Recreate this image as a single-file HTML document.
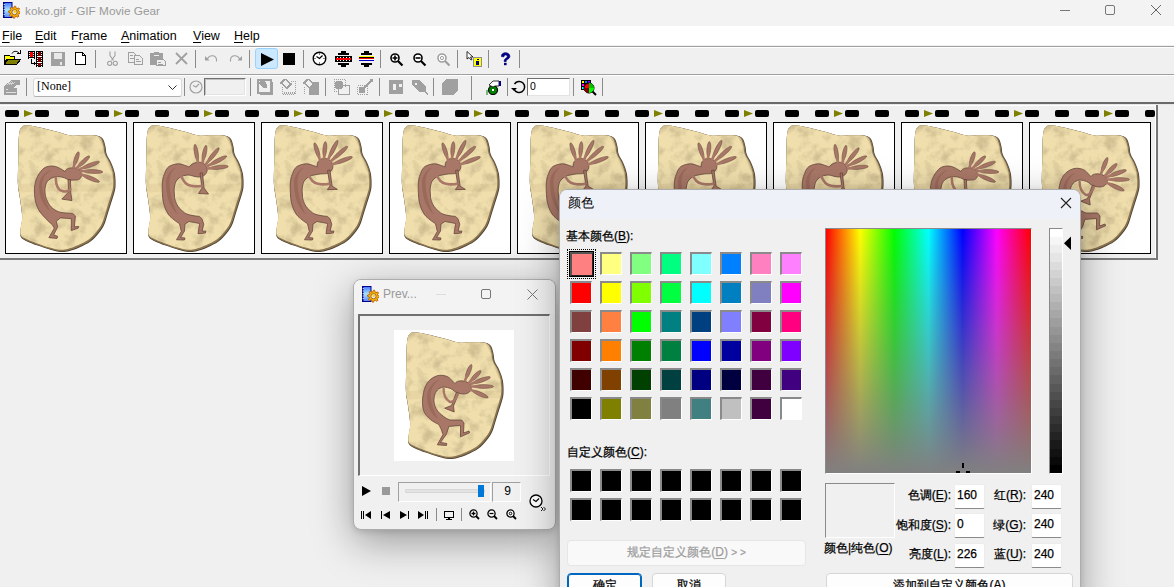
<!DOCTYPE html><html><head><meta charset="utf-8"><style>
*{box-sizing:border-box}
html,body{margin:0;padding:0;width:1174px;height:587px;overflow:hidden;background:#f0f0f0;font-family:"Liberation Sans",sans-serif;font-size:12px;color:#000}
.abs{position:absolute}
.cj{-webkit-text-stroke:0.25px currentColor}
.u{text-decoration:underline;text-underline-offset:2px;text-decoration-thickness:1px}
</style></head><body>

<div class="abs" style="left:0;top:0;width:1174px;height:26px;background:#f3f3f3"></div>
<svg class="abs" style="left:3px;top:2px" width="17" height="17"><defs><linearGradient id="ig" x1="0" y1="0" x2="0" y2="1"><stop offset="0" stop-color="#4a7cff"/><stop offset=".5" stop-color="#a8e4ff"/><stop offset="1" stop-color="#5a8cff"/></linearGradient></defs><rect x="0" y="0" width="9.5" height="16" fill="#00008a"/><rect x="1.5" y="1" width="7" height="14" fill="url(#ig)"/><g fill="#fff"><rect x="0.7" y="2" width="1" height="1"/><rect x="0.7" y="4.5" width="1" height="1"/><rect x="0.7" y="7" width="1" height="1"/><rect x="0.7" y="9.5" width="1" height="1"/><rect x="0.7" y="12" width="1" height="1"/></g><path d="M11.50 4.20 L12.67 4.32 L13.15 6.23 L13.89 6.62 L15.74 5.96 L16.49 6.87 L15.47 8.55 L15.72 9.36 L17.50 10.20 L17.38 11.37 L15.47 11.85 L15.08 12.59 L15.74 14.44 L14.83 15.19 L13.15 14.17 L12.34 14.42 L11.50 16.20 L10.33 16.08 L9.85 14.17 L9.11 13.78 L7.26 14.44 L6.51 13.53 L7.53 11.85 L7.28 11.04 L5.50 10.20 L5.62 9.03 L7.53 8.55 L7.92 7.81 L7.26 5.96 L8.17 5.21 L9.85 6.23 L10.66 5.98Z" fill="#ffb400" stroke="#b85a00" stroke-width="0.9"/><circle cx="11.5" cy="10.2" r="2.6" fill="#e8e8f0" stroke="#8a5000" stroke-width="0.8"/><circle cx="11.8" cy="9.8" r="1.2" fill="#ffd000"/></svg>
<div class="abs" style="left:25px;top:4px;font-size:11.8px;color:#9a9a9a;white-space:nowrap">koko.gif - GIF Movie Gear</div>
<div class="abs" style="left:1060px;top:10px;width:10px;height:1px;background:#777"></div>
<div class="abs" style="left:1105px;top:5px;width:10px;height:10px;border:1px solid #777;border-radius:2px"></div>
<svg class="abs" style="left:1151px;top:5px" width="10" height="10"><path d="M0 0L10 10M10 0L0 10" stroke="#666" stroke-width="1"/></svg>
<div class="abs" style="left:0;top:26px;width:1174px;height:19px;background:#fff"></div>
<div class="abs" style="left:2px;top:29px;font-size:12.5px;white-space:nowrap"><span class="u">F</span>ile</div>
<div class="abs" style="left:35px;top:29px;font-size:12.5px;white-space:nowrap"><span class="u">E</span>dit</div>
<div class="abs" style="left:71px;top:29px;font-size:12.5px;white-space:nowrap">F<span class="u">r</span>ame</div>
<div class="abs" style="left:121px;top:29px;font-size:12.5px;white-space:nowrap"><span class="u">A</span>nimation</div>
<div class="abs" style="left:193px;top:29px;font-size:12.5px;white-space:nowrap"><span class="u">V</span>iew</div>
<div class="abs" style="left:234px;top:29px;font-size:12.5px;white-space:nowrap"><span class="u">H</span>elp</div>
<div class="abs" style="left:0;top:46px;width:1174px;height:1px;background:#a0a0a0"></div>
<div class="abs" style="left:0;top:47px;width:1174px;height:1px;background:#fff"></div>
<div class="abs" style="left:0;top:74px;width:1174px;height:1px;background:#a0a0a0"></div>
<div class="abs" style="left:0;top:75px;width:1174px;height:1px;background:#fff"></div>
<div class="abs" style="left:0;top:102px;width:1174px;height:2px;background:#6a6a6a"></div>
<div class="abs" style="left:0;top:104px;width:1174px;height:1px;background:#e8e8e8"></div>
<div class="abs" style="left:0;top:105px;width:1156px;height:1px;background:#fff"></div>
<div class="abs" style="left:95px;top:50px;width:1px;height:18px;background:#8a8a8a"></div>
<div class="abs" style="left:195px;top:50px;width:1px;height:18px;background:#8a8a8a"></div>
<div class="abs" style="left:249px;top:50px;width:1px;height:18px;background:#8a8a8a"></div>
<div class="abs" style="left:303px;top:50px;width:1px;height:18px;background:#8a8a8a"></div>
<div class="abs" style="left:380px;top:50px;width:1px;height:18px;background:#8a8a8a"></div>
<div class="abs" style="left:457px;top:50px;width:1px;height:18px;background:#8a8a8a"></div>
<div class="abs" style="left:488px;top:50px;width:1px;height:18px;background:#8a8a8a"></div>
<div class="abs" style="left:519px;top:50px;width:1px;height:18px;background:#8a8a8a"></div>
<div class="abs" style="left:26px;top:78px;width:1px;height:18px;background:#8a8a8a"></div>
<div class="abs" style="left:184px;top:78px;width:1px;height:18px;background:#8a8a8a"></div>
<div class="abs" style="left:250px;top:78px;width:1px;height:18px;background:#8a8a8a"></div>
<div class="abs" style="left:325px;top:78px;width:1px;height:18px;background:#8a8a8a"></div>
<div class="abs" style="left:379px;top:78px;width:1px;height:18px;background:#8a8a8a"></div>
<div class="abs" style="left:433px;top:78px;width:1px;height:18px;background:#8a8a8a"></div>
<div class="abs" style="left:507px;top:78px;width:1px;height:18px;background:#8a8a8a"></div>
<div class="abs" style="left:573px;top:78px;width:1px;height:18px;background:#8a8a8a"></div>
<div class="abs" style="left:602px;top:78px;width:1px;height:18px;background:#8a8a8a"></div>
<div class="abs" style="left:471px;top:76px;width:1px;height:24px;background:#8a8a8a"></div>
<svg class="abs" style="left:3px;top:50px" width="18" height="16" shape-rendering="crispEdges"><path d="M1 5h5l1 1h4v3H4L1 14Z" fill="#ffff00" stroke="#000" stroke-width="1"/><path d="M1.5 14.5L5 9.5H17.5L13.5 14.5Z" fill="#808000" stroke="#000" stroke-width="1"/><path d="M9 3.5C10 1 14 0.5 16 3" fill="none" stroke="#000" stroke-width="1" shape-rendering="auto"/><path d="M14 3h3v-3" fill="none" stroke="#000" stroke-width="1"/></svg><svg class="abs" style="left:28px;top:51px" width="16" height="16" shape-rendering="crispEdges"><rect x="0" y="0" width="7" height="8" fill="#000"/><rect x="2" y="1" width="3" height="5" fill="#ff0000"/><rect x="1" y="1" width="1" height="1" fill="#fff"/><rect x="1" y="3" width="1" height="1" fill="#fff"/><rect x="1" y="5" width="1" height="1" fill="#fff"/><rect x="5" y="1" width="1" height="1" fill="#fff"/><rect x="5" y="3" width="1" height="1" fill="#fff"/><rect x="5" y="5" width="1" height="1" fill="#fff"/><rect x="1" y="7" width="5" height="1" fill="#fff"/><path d="M3.5 8V12.5H7" fill="none" stroke="#000" stroke-width="1"/><path d="M6 10.5L8 12.5L6 14.5Z" fill="#000"/><rect x="8" y="0" width="7" height="16" fill="#000"/><rect x="10" y="1" width="3" height="14" fill="#800000"/><rect x="9" y="1" width="1" height="1" fill="#fff"/><rect x="9" y="3" width="1" height="1" fill="#fff"/><rect x="9" y="5" width="1" height="1" fill="#fff"/><rect x="9" y="7" width="1" height="1" fill="#fff"/><rect x="9" y="9" width="1" height="1" fill="#fff"/><rect x="9" y="11" width="1" height="1" fill="#fff"/><rect x="9" y="13" width="1" height="1" fill="#fff"/><rect x="9" y="15" width="1" height="1" fill="#fff"/><rect x="13" y="1" width="1" height="1" fill="#fff"/><rect x="13" y="3" width="1" height="1" fill="#fff"/><rect x="13" y="5" width="1" height="1" fill="#fff"/><rect x="13" y="7" width="1" height="1" fill="#fff"/><rect x="13" y="9" width="1" height="1" fill="#fff"/><rect x="13" y="11" width="1" height="1" fill="#fff"/><rect x="13" y="13" width="1" height="1" fill="#fff"/><rect x="13" y="15" width="1" height="1" fill="#fff"/><rect x="10" y="5" width="3" height="1" fill="#fff"/><rect x="10" y="11" width="3" height="1" fill="#fff"/></svg><svg class="abs" style="left:51px;top:52px" width="14" height="14" shape-rendering="crispEdges"><rect x="0" y="0" width="14" height="14" fill="#a0a0a0"/><rect x="3" y="1" width="8" height="6" fill="#e8e8e8"/><rect x="9" y="10" width="2" height="3" fill="#e8e8e8"/></svg><svg class="abs" style="left:74px;top:51px" width="13" height="15" shape-rendering="crispEdges"><path d="M1.5 1.5H8.5L11.5 4.5V13.5H1.5Z" fill="#fff" stroke="#000" stroke-width="1.2"/><path d="M8.5 1.5V4.5H11.5" fill="none" stroke="#000" stroke-width="1"/></svg><svg class="abs" style="left:107px;top:51px" width="11" height="16" shape-rendering="auto"><path d="M3 0.5V4.5L6.5 9.5M8 0.5V4.5L4.5 9.5" stroke="#a0a0a0" stroke-width="1.1" fill="none"/><circle cx="2.7" cy="12.3" r="2.1" fill="none" stroke="#a0a0a0" stroke-width="1.1"/><circle cx="8.3" cy="12.3" r="2.1" fill="none" stroke="#a0a0a0" stroke-width="1.1"/></svg><svg class="abs" style="left:128px;top:52px" width="16" height="13" shape-rendering="crispEdges"><path d="M0.5 0.5H5.5L7.5 2.5V10.5H0.5Z" fill="#eee" stroke="#a0a0a0"/><path d="M6.5 3.5H11.5L14.5 6.5V12.5H6.5Z" fill="#eee" stroke="#a0a0a0"/><rect x="2" y="3" width="3" height="1" fill="#a0a0a0"/><rect x="2" y="6" width="4" height="1" fill="#a0a0a0"/><rect x="8" y="7" width="3" height="1" fill="#a0a0a0"/><rect x="8" y="9" width="5" height="1" fill="#a0a0a0"/></svg><svg class="abs" style="left:150px;top:52px" width="17" height="14" shape-rendering="crispEdges"><rect x="0" y="1" width="13" height="12" rx="1.5" fill="#a0a0a0"/><rect x="4" y="0" width="5" height="2" fill="#a0a0a0"/><rect x="4" y="3" width="5" height="1" fill="#eee"/><path d="M6.5 7.5H13.5L15.5 9.5V13.5H6.5Z" fill="#eee" stroke="#a0a0a0"/><rect x="8" y="10" width="3" height="1" fill="#a0a0a0"/><rect x="8" y="12" width="5" height="1" fill="#a0a0a0"/></svg><svg class="abs" style="left:175px;top:52px" width="13" height="13" shape-rendering="auto"><path d="M1 1L12 12M12 1L1 12" stroke="#a0a0a0" stroke-width="1.8" fill="none"/></svg><svg class="abs" style="left:205px;top:54px" width="13" height="9" shape-rendering="auto"><path d="M2.5 5C4 0.5 11 0.5 11.5 5.5V7.5" stroke="#a0a0a0" stroke-width="1.1" fill="none"/><path d="M0 2V6.5H4.5Z" fill="#a0a0a0"/></svg><svg class="abs" style="left:229px;top:54px" width="13" height="9" shape-rendering="auto"><path d="M10.5 5C9 0.5 2 0.5 1.5 5.5V7.5" stroke="#a0a0a0" stroke-width="1.1" fill="none"/><path d="M13 2V6.5H8.5Z" fill="#a0a0a0"/></svg><div class="abs" style="left:255px;top:48px;width:23px;height:21px;background:#cce8ff;border:1px solid #99d1ff;border-radius:3px"></div><svg class="abs" style="left:261px;top:53px" width="13" height="13" shape-rendering="auto"><path d="M0 0L13 6.5L0 13Z" fill="#000"/></svg><div class="abs" style="left:283px;top:53px;width:12px;height:12px;background:#000"></div><svg class="abs" style="left:312px;top:51px" width="15" height="15" shape-rendering="auto"><circle cx="7.5" cy="7.5" r="6.3" fill="#fff" stroke="#000" stroke-width="1.4"/><path d="M4.5 5.5L7.5 7.5L10.5 4.5" fill="none" stroke="#000" stroke-width="1.3"/><rect x="7" y="2.5" width="1" height="1" fill="#000"/><rect x="7" y="11.5" width="1" height="1" fill="#000"/><rect x="2.5" y="7" width="1" height="1" fill="#000"/><rect x="11.5" y="7" width="1" height="1" fill="#000"/></svg><svg class="abs" style="left:335px;top:51px" width="17" height="16" shape-rendering="crispEdges"><rect x="6" y="0" width="5" height="2" fill="#000"/><rect x="3" y="2" width="11" height="2" fill="#000"/><rect x="0" y="5" width="17" height="6" fill="#000"/><rect x="1" y="7" width="15" height="2" fill="#ff0000"/><rect x="2" y="6" width="1" height="1" fill="#fff"/><rect x="5" y="6" width="1" height="1" fill="#fff"/><rect x="8" y="6" width="1" height="1" fill="#fff"/><rect x="11" y="6" width="1" height="1" fill="#fff"/><rect x="14" y="6" width="1" height="1" fill="#fff"/><rect x="2" y="9" width="1" height="1" fill="#fff"/><rect x="5" y="9" width="1" height="1" fill="#fff"/><rect x="8" y="9" width="1" height="1" fill="#fff"/><rect x="11" y="9" width="1" height="1" fill="#fff"/><rect x="14" y="9" width="1" height="1" fill="#fff"/><rect x="3" y="12" width="11" height="2" fill="#000"/><rect x="6" y="14" width="5" height="2" fill="#000"/></svg><svg class="abs" style="left:358px;top:51px" width="17" height="16" shape-rendering="crispEdges"><rect x="6" y="0" width="5" height="2" fill="#000"/><rect x="3" y="2" width="11" height="2" fill="#000"/><rect x="1" y="5" width="15" height="1" fill="#ffff00"/><rect x="1" y="6" width="15" height="1" fill="#000"/><rect x="1" y="7" width="15" height="1" fill="#ff0000"/><rect x="1" y="8" width="15" height="1" fill="#fff"/><rect x="1" y="9" width="15" height="1" fill="#0000c0"/><rect x="3" y="12" width="11" height="2" fill="#000"/><rect x="6" y="14" width="5" height="2" fill="#000"/></svg><svg class="abs" style="left:390px;top:53px" width="14" height="14" shape-rendering="auto"><circle cx="5" cy="5" r="4" fill="#fff" stroke="#000" stroke-width="1.6"/><path d="M8 8L12.5 12.5" stroke="#000" stroke-width="2.2"/><path d="M2.5 5H7.5M5 2.5V7.5" stroke="#000" stroke-width="1.6"/></svg><svg class="abs" style="left:413px;top:53px" width="14" height="14" shape-rendering="auto"><circle cx="5" cy="5" r="4" fill="#fff" stroke="#000" stroke-width="1.6"/><path d="M8 8L12.5 12.5" stroke="#000" stroke-width="2.2"/><path d="M2.5 5H7.5" stroke="#000" stroke-width="1.6"/></svg><svg class="abs" style="left:437px;top:53px" width="14" height="14" shape-rendering="auto"><circle cx="5" cy="5" r="4" fill="#fff" stroke="#a0a0a0" stroke-width="1.6"/><path d="M8 8L12.5 12.5" stroke="#a0a0a0" stroke-width="2.2"/><circle cx="5" cy="5" r="1.6" fill="none" stroke="#a0a0a0" stroke-width="1"/></svg><svg class="abs" style="left:466px;top:51px" width="17" height="17" shape-rendering="auto"><path d="M1 0.5V8L3 6.5L5 9L6 8.5L4.5 6H7Z" fill="#fff" stroke="#000" stroke-width="0.8"/><rect x="7.5" y="6.5" width="8" height="9" fill="#ffff00" stroke="#909090"/><rect x="11" y="8" width="2" height="1" fill="#000080"/><rect x="10" y="10" width="3" height="4" fill="#000080"/></svg><svg class="abs" style="left:500px;top:52px" width="11" height="14" shape-rendering="auto"><path d="M1.5 4.5C1.5 1.5 3.5 0.8 5.5 0.8C8 0.8 9.8 2.3 9.8 4.3C9.8 6.3 8 7 6.8 7.8C6.2 8.2 6.2 8.8 6.2 9.5H4.2C4.2 8.5 4.3 7.5 5.5 6.6C6.8 5.7 7.3 5.2 7.3 4.4C7.3 3.4 6.6 2.9 5.5 2.9C4.4 2.9 3.9 3.6 3.9 4.8Z" fill="#000080" stroke="#000080" stroke-width="0.8"/><rect x="4" y="10.8" width="2.6" height="2.4" fill="#000080"/></svg><svg class="abs" style="left:4px;top:80px" width="17" height="15" shape-rendering="crispEdges"><path d="M0 6L8 0L13 0L16 0V5H13L9 8H13V15H0Z" fill="#a0a0a0"/><path d="M3 5L8 1M5 5L9 2M7 5L11 2" stroke="#e0e0e0" stroke-width="0.8"/><rect x="2" y="9" width="2" height="1" fill="#e0e0e0"/><rect x="2" y="12" width="10" height="1" fill="#e0e0e0"/></svg><div class="abs" style="left:33px;top:78px;width:149px;height:19px;background:#fff;border:1px solid #d9d9d9;border-bottom-color:#b0b0b0;border-radius:3px"></div><div class="abs" style="left:37px;top:79px;font:12px 'Liberation Serif',serif;line-height:15px;letter-spacing:0px;color:#000">[None]</div><svg class="abs" style="left:168px;top:85px" width="10" height="6" shape-rendering="auto"><path d="M0.5 0.5L4.5 4.5L8.5 0.5" fill="none" stroke="#333" stroke-width="1"/></svg><svg class="abs" style="left:189px;top:80px" width="14" height="14" shape-rendering="auto"><circle cx="7" cy="7" r="6" fill="none" stroke="#a0a0a0" stroke-width="1.2"/><path d="M4 5.5L7 7L10 4" fill="none" stroke="#a0a0a0" stroke-width="1.1"/></svg><div class="abs" style="left:204px;top:78px;width:42px;height:18px;background:#f0f0f0;border:1px solid;border-color:#707070 #fff #fff #707070"></div><div class="abs" style="left:205px;top:79px;width:40px;height:16px;border:1px solid;border-color:#c0c0c0 #e3e3e3 #e3e3e3 #c0c0c0"></div><svg class="abs" style="left:257px;top:79px" width="17" height="16" shape-rendering="crispEdges"><rect x="3" y="3" width="13" height="13" fill="#a0a0a0"/><rect x="1" y="1" width="13" height="13" fill="#f0f0f0" stroke="#a0a0a0" stroke-width="1.5"/><path d="M1 4L5 0L9 4L5 8Z" fill="#a0a0a0"/><circle cx="8" cy="7" r="2.5" fill="#a0a0a0"/></svg><svg class="abs" style="left:280px;top:79px" width="17" height="16" shape-rendering="crispEdges"><path d="M1 4L5 0L11 5L7 9Z" fill="none" stroke="#a0a0a0" stroke-width="1.5"/><path d="M2 8V15H15V2H11" fill="none" stroke="#a0a0a0" stroke-width="1" stroke-dasharray="1 1"/><path d="M4 14H15" stroke="#a0a0a0" stroke-width="2" stroke-dasharray="1 1"/></svg><svg class="abs" style="left:303px;top:79px" width="17" height="16" shape-rendering="crispEdges"><rect x="6" y="3" width="10" height="13" fill="#a0a0a0"/><path d="M1 4L5 0L11 5L7 9Z" fill="#f0f0f0" stroke="#a0a0a0" stroke-width="1.5"/><path d="M1 8V16" stroke="#a0a0a0" stroke-dasharray="1 1"/></svg><svg class="abs" style="left:333px;top:79px" width="18" height="16" shape-rendering="crispEdges"><path d="M1 0H12V8" fill="none" stroke="#a0a0a0" stroke-dasharray="1 1"/><path d="M1 0V12H5" fill="none" stroke="#a0a0a0" stroke-dasharray="1 1"/><rect x="5.5" y="6.5" width="11" height="9" fill="none" stroke="#a0a0a0" stroke-width="1.5"/><circle cx="6" cy="6" r="4.5" fill="#a0a0a0"/></svg><svg class="abs" style="left:357px;top:79px" width="17" height="16" shape-rendering="crispEdges"><rect x="0.5" y="6.5" width="10" height="9" fill="none" stroke="#a0a0a0" stroke-dasharray="1 1"/><circle cx="5" cy="11" r="3.5" fill="#a0a0a0"/><path d="M6 10L14 2" stroke="#a0a0a0" stroke-width="1.5"/><path d="M12 0H16V4Z" fill="#a0a0a0"/></svg><svg class="abs" style="left:389px;top:80px" width="14" height="14" shape-rendering="crispEdges"><rect x="0" y="0" width="14" height="14" fill="#a0a0a0"/><rect x="4" y="4" width="3" height="6" fill="#f0f0f0"/><rect x="10" y="4" width="3" height="3" fill="#f0f0f0"/></svg><svg class="abs" style="left:412px;top:80px" width="16" height="15" shape-rendering="crispEdges"><path d="M0 0H7L14 7V12L16 14L15 15L12 12H7L0 5Z" fill="#a0a0a0"/><rect x="3" y="3" width="2" height="2" fill="#f0f0f0"/></svg><svg class="abs" style="left:442px;top:79px" width="16" height="16" shape-rendering="crispEdges"><path d="M4 0H16V11L11 16H0V4Z" fill="#a0a0a0"/></svg><svg class="abs" style="left:486px;top:80px" width="16" height="15" shape-rendering="auto"><circle cx="7" cy="10" r="4.5" fill="#008000" stroke="#000" stroke-width="1.2"/><rect x="6" y="9" width="2" height="2" fill="#fff"/><path d="M3 5L7 1H13V6H9L7 7Z" fill="#fff" stroke="#000" stroke-width="0.8"/><rect x="13" y="1" width="2" height="5" fill="#000080"/><path d="M1 10V15" stroke="#008000"/></svg><svg class="abs" style="left:511px;top:80px" width="15" height="14" shape-rendering="auto"><path d="M3 9A5.5 5.5 0 1 0 3.5 4" fill="none" stroke="#000" stroke-width="1.5"/><path d="M0 8H6L3 11Z" fill="#000"/></svg><div class="abs" style="left:527px;top:78px;width:43px;height:18px;background:#fff;border:1px solid;border-color:#707070 #e3e3e3 #e3e3e3 #707070"></div><div class="abs" style="left:530px;top:80px;font:10.5px 'Liberation Sans',sans-serif;line-height:13px">0</div><svg class="abs" style="left:581px;top:80px" width="16" height="16" shape-rendering="auto"><rect x="0" y="0" width="10" height="10" fill="#000"/><rect x="1" y="1" width="2" height="2" fill="#ffff00"/><rect x="1" y="4" width="2" height="2" fill="#ff00ff"/><rect x="1" y="7" width="2" height="2" fill="#00ffff"/><rect x="4" y="1" width="2" height="2" fill="#0080ff"/><rect x="7" y="1" width="2" height="2" fill="#8000ff"/><circle cx="8" cy="8" r="5" fill="#ff0000" stroke="#000" stroke-width="1"/><path d="M8 3A5 5 0 0 1 13 8H8Z" fill="#00c000"/><path d="M8 8H13A5 5 0 0 1 8 13Z" fill="#00ff00"/><path d="M3 8A5 5 0 0 0 8 13V8Z" fill="#800000"/><path d="M11.5 11.5L15 15" stroke="#000" stroke-width="2"/></svg>
<div class="abs" style="left:1156px;top:105px;width:2px;height:154px;background:#777"></div>
<div class="abs" style="left:1155px;top:106px;width:1px;height:152px;background:#fff"></div>
<div class="abs" style="left:0;top:258px;width:1158px;height:2px;background:#7a7a7a"></div>
<div class="abs" style="left:5px;top:110px;width:14px;height:7px;background:#000;border-radius:2px"></div><div class="abs" style="left:35px;top:110px;width:14px;height:7px;background:#000;border-radius:2px"></div><div class="abs" style="left:65px;top:110px;width:14px;height:7px;background:#000;border-radius:2px"></div><div class="abs" style="left:95px;top:110px;width:14px;height:7px;background:#000;border-radius:2px"></div><div class="abs" style="left:125px;top:110px;width:14px;height:7px;background:#000;border-radius:2px"></div><div class="abs" style="left:155px;top:110px;width:14px;height:7px;background:#000;border-radius:2px"></div><div class="abs" style="left:185px;top:110px;width:14px;height:7px;background:#000;border-radius:2px"></div><div class="abs" style="left:215px;top:110px;width:14px;height:7px;background:#000;border-radius:2px"></div><div class="abs" style="left:245px;top:110px;width:14px;height:7px;background:#000;border-radius:2px"></div><div class="abs" style="left:275px;top:110px;width:14px;height:7px;background:#000;border-radius:2px"></div><div class="abs" style="left:305px;top:110px;width:14px;height:7px;background:#000;border-radius:2px"></div><div class="abs" style="left:335px;top:110px;width:14px;height:7px;background:#000;border-radius:2px"></div><div class="abs" style="left:365px;top:110px;width:14px;height:7px;background:#000;border-radius:2px"></div><div class="abs" style="left:395px;top:110px;width:14px;height:7px;background:#000;border-radius:2px"></div><div class="abs" style="left:425px;top:110px;width:14px;height:7px;background:#000;border-radius:2px"></div><div class="abs" style="left:455px;top:110px;width:14px;height:7px;background:#000;border-radius:2px"></div><div class="abs" style="left:485px;top:110px;width:14px;height:7px;background:#000;border-radius:2px"></div><div class="abs" style="left:515px;top:110px;width:14px;height:7px;background:#000;border-radius:2px"></div><div class="abs" style="left:545px;top:110px;width:14px;height:7px;background:#000;border-radius:2px"></div><div class="abs" style="left:575px;top:110px;width:14px;height:7px;background:#000;border-radius:2px"></div><div class="abs" style="left:605px;top:110px;width:14px;height:7px;background:#000;border-radius:2px"></div><div class="abs" style="left:635px;top:110px;width:14px;height:7px;background:#000;border-radius:2px"></div><div class="abs" style="left:665px;top:110px;width:14px;height:7px;background:#000;border-radius:2px"></div><div class="abs" style="left:695px;top:110px;width:14px;height:7px;background:#000;border-radius:2px"></div><div class="abs" style="left:725px;top:110px;width:14px;height:7px;background:#000;border-radius:2px"></div><div class="abs" style="left:755px;top:110px;width:14px;height:7px;background:#000;border-radius:2px"></div><div class="abs" style="left:785px;top:110px;width:14px;height:7px;background:#000;border-radius:2px"></div><div class="abs" style="left:815px;top:110px;width:14px;height:7px;background:#000;border-radius:2px"></div><div class="abs" style="left:845px;top:110px;width:14px;height:7px;background:#000;border-radius:2px"></div><div class="abs" style="left:875px;top:110px;width:14px;height:7px;background:#000;border-radius:2px"></div><div class="abs" style="left:905px;top:110px;width:14px;height:7px;background:#000;border-radius:2px"></div><div class="abs" style="left:935px;top:110px;width:14px;height:7px;background:#000;border-radius:2px"></div><div class="abs" style="left:965px;top:110px;width:14px;height:7px;background:#000;border-radius:2px"></div><div class="abs" style="left:995px;top:110px;width:14px;height:7px;background:#000;border-radius:2px"></div><div class="abs" style="left:1025px;top:110px;width:14px;height:7px;background:#000;border-radius:2px"></div><div class="abs" style="left:1055px;top:110px;width:14px;height:7px;background:#000;border-radius:2px"></div><div class="abs" style="left:1085px;top:110px;width:14px;height:7px;background:#000;border-radius:2px"></div><div class="abs" style="left:1115px;top:110px;width:14px;height:7px;background:#000;border-radius:2px"></div><div class="abs" style="left:1145px;top:110px;width:10px;height:7px;background:#000;border-radius:2px"></div>
<svg class="abs" style="left:24px;top:110px" width="9" height="7"><path d="M0 0L9 3.5L0 7Z" fill="#808000"/></svg><svg class="abs" style="left:114px;top:110px" width="9" height="7"><path d="M0 0L9 3.5L0 7Z" fill="#808000"/></svg><svg class="abs" style="left:204px;top:110px" width="9" height="7"><path d="M0 0L9 3.5L0 7Z" fill="#808000"/></svg><svg class="abs" style="left:294px;top:110px" width="9" height="7"><path d="M0 0L9 3.5L0 7Z" fill="#808000"/></svg><svg class="abs" style="left:384px;top:110px" width="9" height="7"><path d="M0 0L9 3.5L0 7Z" fill="#808000"/></svg><svg class="abs" style="left:474px;top:110px" width="9" height="7"><path d="M0 0L9 3.5L0 7Z" fill="#808000"/></svg><svg class="abs" style="left:564px;top:110px" width="9" height="7"><path d="M0 0L9 3.5L0 7Z" fill="#808000"/></svg><svg class="abs" style="left:654px;top:110px" width="9" height="7"><path d="M0 0L9 3.5L0 7Z" fill="#808000"/></svg><svg class="abs" style="left:744px;top:110px" width="9" height="7"><path d="M0 0L9 3.5L0 7Z" fill="#808000"/></svg><svg class="abs" style="left:834px;top:110px" width="9" height="7"><path d="M0 0L9 3.5L0 7Z" fill="#808000"/></svg><svg class="abs" style="left:924px;top:110px" width="9" height="7"><path d="M0 0L9 3.5L0 7Z" fill="#808000"/></svg><svg class="abs" style="left:1014px;top:110px" width="9" height="7"><path d="M0 0L9 3.5L0 7Z" fill="#808000"/></svg><svg class="abs" style="left:1104px;top:110px" width="9" height="7"><path d="M0 0L9 3.5L0 7Z" fill="#808000"/></svg>
<svg width="0" height="0" style="position:absolute"><defs><symbol id="rock" viewBox="0 0 120 130">
<filter id="tex" x="0" y="0" width="120" height="130" filterUnits="userSpaceOnUse"><feTurbulence type="fractalNoise" baseFrequency="0.08" numOctaves="5" seed="11"/><feColorMatrix values="0 0 0 0 0.42  0 0 0 0 0.33  0 0 0 0 0.18  -2.6 0 0 0 1.45"/></filter>
<clipPath id="rc"><path d="M15.30 4.40 C16.80 2.47 18.42 2.32 21.90 2.40 C25.38 2.48 31.23 3.82 36.20 4.90 C41.17 5.98 46.93 7.63 51.70 8.90 C56.47 10.17 59.83 11.93 64.80 12.50 C69.77 13.07 76.93 12.23 81.50 12.30 C86.07 12.37 89.62 12.27 92.20 12.90 C94.78 13.53 95.80 14.38 97.00 16.10 C98.20 17.82 98.77 20.62 99.40 23.20 C100.03 25.78 99.82 28.82 100.80 31.60 C101.78 34.38 103.95 36.72 105.30 39.90 C106.65 43.08 108.20 46.72 108.90 50.70 C109.60 54.68 109.70 60.25 109.50 63.80 C109.30 67.35 108.53 68.97 107.70 72.00 C106.87 75.03 105.55 78.67 104.50 82.00 C103.45 85.33 102.45 88.72 101.40 92.00 C100.35 95.28 99.62 98.70 98.20 101.70 C96.78 104.70 95.18 107.18 92.90 110.00 C90.62 112.82 87.67 116.23 84.50 118.60 C81.33 120.97 77.42 122.63 73.90 124.20 C70.38 125.77 66.57 127.20 63.40 128.00 C60.23 128.80 58.07 129.20 54.90 129.00 C51.73 128.80 48.27 127.87 44.40 126.80 C40.53 125.73 35.58 124.00 31.70 122.60 C27.82 121.20 23.88 119.78 21.10 118.40 C18.32 117.02 16.08 116.20 15.00 114.30 C13.92 112.40 14.40 109.98 14.60 107.00 C14.80 104.02 16.07 99.93 16.20 96.40 C16.33 92.87 15.87 89.87 15.40 85.80 C14.93 81.73 13.98 76.20 13.40 72.00 C12.82 67.80 12.08 66.47 11.90 60.60 C11.72 54.73 12.13 44.57 12.30 36.80 C12.47 29.03 12.40 19.40 12.90 14.00 C13.40 8.60 13.80 6.33 15.30 4.40Z" transform="translate(13,4) scale(0.976,0.982) translate(-13,-4)"/></clipPath>
<path d="M15.30 4.40 C16.80 2.47 18.42 2.32 21.90 2.40 C25.38 2.48 31.23 3.82 36.20 4.90 C41.17 5.98 46.93 7.63 51.70 8.90 C56.47 10.17 59.83 11.93 64.80 12.50 C69.77 13.07 76.93 12.23 81.50 12.30 C86.07 12.37 89.62 12.27 92.20 12.90 C94.78 13.53 95.80 14.38 97.00 16.10 C98.20 17.82 98.77 20.62 99.40 23.20 C100.03 25.78 99.82 28.82 100.80 31.60 C101.78 34.38 103.95 36.72 105.30 39.90 C106.65 43.08 108.20 46.72 108.90 50.70 C109.60 54.68 109.70 60.25 109.50 63.80 C109.30 67.35 108.53 68.97 107.70 72.00 C106.87 75.03 105.55 78.67 104.50 82.00 C103.45 85.33 102.45 88.72 101.40 92.00 C100.35 95.28 99.62 98.70 98.20 101.70 C96.78 104.70 95.18 107.18 92.90 110.00 C90.62 112.82 87.67 116.23 84.50 118.60 C81.33 120.97 77.42 122.63 73.90 124.20 C70.38 125.77 66.57 127.20 63.40 128.00 C60.23 128.80 58.07 129.20 54.90 129.00 C51.73 128.80 48.27 127.87 44.40 126.80 C40.53 125.73 35.58 124.00 31.70 122.60 C27.82 121.20 23.88 119.78 21.10 118.40 C18.32 117.02 16.08 116.20 15.00 114.30 C13.92 112.40 14.40 109.98 14.60 107.00 C14.80 104.02 16.07 99.93 16.20 96.40 C16.33 92.87 15.87 89.87 15.40 85.80 C14.93 81.73 13.98 76.20 13.40 72.00 C12.82 67.80 12.08 66.47 11.90 60.60 C11.72 54.73 12.13 44.57 12.30 36.80 C12.47 29.03 12.40 19.40 12.90 14.00 C13.40 8.60 13.80 6.33 15.30 4.40Z" fill="#4d3f30"/>
<path d="M15.30 4.40 C16.80 2.47 18.42 2.32 21.90 2.40 C25.38 2.48 31.23 3.82 36.20 4.90 C41.17 5.98 46.93 7.63 51.70 8.90 C56.47 10.17 59.83 11.93 64.80 12.50 C69.77 13.07 76.93 12.23 81.50 12.30 C86.07 12.37 89.62 12.27 92.20 12.90 C94.78 13.53 95.80 14.38 97.00 16.10 C98.20 17.82 98.77 20.62 99.40 23.20 C100.03 25.78 99.82 28.82 100.80 31.60 C101.78 34.38 103.95 36.72 105.30 39.90 C106.65 43.08 108.20 46.72 108.90 50.70 C109.60 54.68 109.70 60.25 109.50 63.80 C109.30 67.35 108.53 68.97 107.70 72.00 C106.87 75.03 105.55 78.67 104.50 82.00 C103.45 85.33 102.45 88.72 101.40 92.00 C100.35 95.28 99.62 98.70 98.20 101.70 C96.78 104.70 95.18 107.18 92.90 110.00 C90.62 112.82 87.67 116.23 84.50 118.60 C81.33 120.97 77.42 122.63 73.90 124.20 C70.38 125.77 66.57 127.20 63.40 128.00 C60.23 128.80 58.07 129.20 54.90 129.00 C51.73 128.80 48.27 127.87 44.40 126.80 C40.53 125.73 35.58 124.00 31.70 122.60 C27.82 121.20 23.88 119.78 21.10 118.40 C18.32 117.02 16.08 116.20 15.00 114.30 C13.92 112.40 14.40 109.98 14.60 107.00 C14.80 104.02 16.07 99.93 16.20 96.40 C16.33 92.87 15.87 89.87 15.40 85.80 C14.93 81.73 13.98 76.20 13.40 72.00 C12.82 67.80 12.08 66.47 11.90 60.60 C11.72 54.73 12.13 44.57 12.30 36.80 C12.47 29.03 12.40 19.40 12.90 14.00 C13.40 8.60 13.80 6.33 15.30 4.40Z" fill="#8a7550" transform="translate(13,4) scale(0.992,0.994) translate(-13,-4)"/>
<path d="M15.30 4.40 C16.80 2.47 18.42 2.32 21.90 2.40 C25.38 2.48 31.23 3.82 36.20 4.90 C41.17 5.98 46.93 7.63 51.70 8.90 C56.47 10.17 59.83 11.93 64.80 12.50 C69.77 13.07 76.93 12.23 81.50 12.30 C86.07 12.37 89.62 12.27 92.20 12.90 C94.78 13.53 95.80 14.38 97.00 16.10 C98.20 17.82 98.77 20.62 99.40 23.20 C100.03 25.78 99.82 28.82 100.80 31.60 C101.78 34.38 103.95 36.72 105.30 39.90 C106.65 43.08 108.20 46.72 108.90 50.70 C109.60 54.68 109.70 60.25 109.50 63.80 C109.30 67.35 108.53 68.97 107.70 72.00 C106.87 75.03 105.55 78.67 104.50 82.00 C103.45 85.33 102.45 88.72 101.40 92.00 C100.35 95.28 99.62 98.70 98.20 101.70 C96.78 104.70 95.18 107.18 92.90 110.00 C90.62 112.82 87.67 116.23 84.50 118.60 C81.33 120.97 77.42 122.63 73.90 124.20 C70.38 125.77 66.57 127.20 63.40 128.00 C60.23 128.80 58.07 129.20 54.90 129.00 C51.73 128.80 48.27 127.87 44.40 126.80 C40.53 125.73 35.58 124.00 31.70 122.60 C27.82 121.20 23.88 119.78 21.10 118.40 C18.32 117.02 16.08 116.20 15.00 114.30 C13.92 112.40 14.40 109.98 14.60 107.00 C14.80 104.02 16.07 99.93 16.20 96.40 C16.33 92.87 15.87 89.87 15.40 85.80 C14.93 81.73 13.98 76.20 13.40 72.00 C12.82 67.80 12.08 66.47 11.90 60.60 C11.72 54.73 12.13 44.57 12.30 36.80 C12.47 29.03 12.40 19.40 12.90 14.00 C13.40 8.60 13.80 6.33 15.30 4.40Z" fill="#f0dfad" transform="translate(13,4) scale(0.976,0.982) translate(-13,-4)"/>
<g clip-path="url(#rc)">
<rect x="0" y="0" width="120" height="130" filter="url(#tex)" opacity=".5"/>
<path d="M10 62 C30 58 60 64 110 60 L110 68 C70 70 40 66 10 70Z" fill="#c9b283" opacity=".22"/>
<path d="M90 12 C98 20 100 40 106 50 C110 70 104 95 92 112 L100 112 L115 60 L100 10Z" fill="#b9a274" opacity=".45"/>
</g>
</symbol><symbol id="kokoA" viewBox="0 0 120 130">
<use href="#rock"/>
<g fill="#a87767" stroke="#66483c" stroke-width=".8">
<path d="M28.4 69 C28 60 31 52 36.7 46.2 C40 43 45 42.5 49.7 43.5 C53 44.5 56 46.5 58.9 48.5 C60 46 62 45 67 44.7 C72 44.5 75.5 48 75.5 52 C75.5 56 72 57.5 68.9 57 C66 57.5 63 57 61.2 56.2 C58 54 52 53 48.9 53.9 C44 55 41 58 40 61 C38 66 39 74 41.7 78.8 C44 84 49 88 54.6 89.3 C58 90 62 90 66.7 90.5 L69.4 92.9 L68.4 103.8 L72.8 103.5 L72.1 105.2 L65.3 107.5 L65.3 95.6 L54.4 94.9 L50.3 98.3 L51.7 103.8 L47.6 112 L51.7 113.3 L51 115.4 L42.9 114.7 L48.3 105.2 L46.3 101.8 C42 98 37 93 34 89 C30 83 28.6 76 28.4 69Z"/>
<path d="M33 62 C33 72 36 82 44 88 C40 80 37 72 36 62 C36 55 40 50 46 47 C40 48 34 54 33 62Z" fill="#996a5a" stroke="none"/>
<path d="M62 56.5 L64.5 56.5 L64.8 70 L66 77.6 L55.8 76.1 L62.6 69Z"/>
</g>
<g fill="none" stroke="#a87767" stroke-linecap="round">
<path d="M49.7 55 C50 62 52 67 56 68 C60 69 63 68 64.3 66" stroke-width="2.6"/>
</g><ellipse cx="70.38" cy="35.53" rx="7.07" ry="1.9" transform="rotate(-71.8 70.38 35.53)" fill="#a87767" stroke="#66483c" stroke-width=".5"/><path d="M67.6 44 L69.04 39.62" stroke="#a87767" stroke-width="2.6" stroke-linecap="round"/><ellipse cx="77.88" cy="38.33" rx="7.71" ry="1.9" transform="rotate(-43.3 77.88 38.33)" fill="#a87767" stroke="#66483c" stroke-width=".5"/><path d="M70.8 45 L74.46 41.55" stroke="#a87767" stroke-width="2.6" stroke-linecap="round"/><ellipse cx="84.85" cy="41.94" rx="9.18" ry="1.9" transform="rotate(-20.5 84.85 41.94)" fill="#a87767" stroke="#66483c" stroke-width=".5"/><path d="M74 46 L79.61 43.90" stroke="#a87767" stroke-width="2.6" stroke-linecap="round"/><ellipse cx="87.14" cy="48.52" rx="9.71" ry="1.9" transform="rotate(2.4 87.14 48.52)" fill="#a87767" stroke="#66483c" stroke-width=".5"/><path d="M74.9 48 L81.23 48.27" stroke="#a87767" stroke-width="2.6" stroke-linecap="round"/><ellipse cx="85.22" cy="55.53" rx="8.85" ry="1.9" transform="rotate(22.3 85.22 55.53)" fill="#a87767" stroke="#66483c" stroke-width=".5"/><path d="M74.9 51.3 L80.24 53.49" stroke="#a87767" stroke-width="2.6" stroke-linecap="round"/>
</symbol><symbol id="kokoB" viewBox="0 0 120 130">
<use href="#rock"/>
<g fill="#a87767" stroke="#66483c" stroke-width=".8">
<path d="M28.2 66.4 C28 58 29 54 30.5 50.7 C32 46 34 43.5 37 42.5 C40 41 44 40.5 47 41 C50 42 53 43 55.2 44 C54.5 38.5 58 35.5 62.5 35.5 C67 35.5 70.8 39 70.8 43.5 C70.8 48 67 50.8 62.5 50.8 C59.5 50.8 57.5 51 55 51.5 C51 52 47 53 45 55 C42 57.5 41 60 40.6 63 C40 66 40 68 40.4 70.9 C40 76 42 80 44 83.3 C47 87 50 90 52.9 91.1 C57 92.5 61 93 65.3 93.4 L67.8 95.5 L69.8 101.2 L68 108 L72 108.2 L71.4 110 L64 110.8 L65.6 100.5 L55 98.5 L51 101 L50.5 108 L46.5 114.6 L51 115 L50.5 117 L42.5 116.8 L47.3 108.5 L45.5 100.8 C40 97 36 94 34 91 C31 86 29 80 28.6 74 Z"/>
<path d="M32 60 C32 72 35 84 44 92 C39 82 36 72 35.5 60 C35.5 52 38 47 43 44 C37 46 32 52 32 60Z" fill="#996a5a" stroke="none"/>
<path d="M65.5 47.5 L68 47 L70 63 L75.4 66.4 L65.3 66.6 L68 63Z"/>
</g>
<g fill="none" stroke="#a87767" stroke-linecap="round">
<path d="M46 50.5 C48 56 51 60 56 60.8 C60 61.5 64 61.5 67 60.8" stroke-width="2.6"/>
</g><ellipse cx="54.93" cy="27.43" rx="7.97" ry="1.9" transform="rotate(-107.8 54.93 27.43)" fill="#a87767" stroke="#66483c" stroke-width=".5"/><path d="M58 37 L56.41 32.05" stroke="#a87767" stroke-width="2.6" stroke-linecap="round"/><ellipse cx="62.81" cy="26.31" rx="7.71" ry="1.9" transform="rotate(-85.2 62.81 26.31)" fill="#a87767" stroke="#66483c" stroke-width=".5"/><path d="M62 36 L62.42 30.99" stroke="#a87767" stroke-width="2.6" stroke-linecap="round"/><ellipse cx="71.39" cy="25.83" rx="9.48" ry="1.9" transform="rotate(-63.2 71.39 25.83)" fill="#a87767" stroke="#66483c" stroke-width=".5"/><path d="M66 36.5 L68.79 30.98" stroke="#a87767" stroke-width="2.6" stroke-linecap="round"/><ellipse cx="78.01" cy="30.09" rx="10.07" ry="1.9" transform="rotate(-41.5 78.01 30.09)" fill="#a87767" stroke="#66483c" stroke-width=".5"/><path d="M68.5 38.5 L73.42 34.15" stroke="#a87767" stroke-width="2.6" stroke-linecap="round"/><ellipse cx="81.37" cy="37.27" rx="9.62" ry="1.9" transform="rotate(-20.4 81.37 37.27)" fill="#a87767" stroke="#66483c" stroke-width=".5"/><path d="M70 41.5 L75.88 39.31" stroke="#a87767" stroke-width="2.6" stroke-linecap="round"/>
</symbol><symbol id="kokoC" viewBox="0 0 120 130">
<use href="#rock"/>
<g fill="#a87767" stroke="#66483c" stroke-width=".8">
<path d="M29.2 64.7 C30 58 33 52 37 49 C41 46 44.5 45 47.6 45.3 C51 45.5 54 46.5 56 48.4 L60.9 53.5 C62.5 51.5 64 51 66 50.9 C71 50.5 76 52.5 77.2 57 C78 61 74 64 70 64 C66 64 63 63 60.9 61.6 C58.5 59 55 57.5 50.6 57 C46 57 42.5 60 41 64 C40 67 39.8 70 40.1 72 C40.5 76 42.5 81 47.5 84.8 C50 87 53 89 56 90 L67.6 90 L70 93 L69.5 103 L75 101 L75.6 102.8 L66.5 106.8 L66.5 95.5 L54.9 96.4 L52.5 104 L46.5 112.5 L52.8 113.5 L52.5 115.5 L43.3 114.8 L49 104.5 L47.5 100 C46.5 98 45.5 95.5 44.4 94.3 C40 92 37 90.5 34.8 88 C31.5 85 29.8 82 29.6 80.6 C28.6 77 28.3 73 28.5 70 C28.6 68 28.8 66 29.2 64.7Z"/>
<path d="M33 66 C33 75 36 83 44 89 C40 81 37 74 36.5 66 C36.5 59 40 53 46 49.5 C40 51 34 57 33 66Z" fill="#996a5a" stroke="none"/>
<path d="M62.5 62 L64.8 63 L59.5 76 L60.2 82 L50.6 78.2 L57.5 75.5Z"/>
</g>
<g fill="none" stroke="#a87767" stroke-linecap="round">
<path d="M49.6 58.6 C49.5 64 51 69 55.8 71.9 C58.5 72.5 61 71.5 63.9 64" stroke-width="2.4"/>
</g><ellipse cx="74.64" cy="41.53" rx="7.58" ry="1.9" transform="rotate(-68.3 74.64 41.53)" fill="#a87767" stroke="#66483c" stroke-width=".5"/><path d="M71.1 50.4 L72.93 45.81" stroke="#a87767" stroke-width="2.6" stroke-linecap="round"/><ellipse cx="81.70" cy="45.95" rx="7.32" ry="1.9" transform="rotate(-45.3 81.70 45.95)" fill="#a87767" stroke="#66483c" stroke-width=".5"/><path d="M75.2 52.5 L78.56 49.11" stroke="#a87767" stroke-width="2.6" stroke-linecap="round"/><ellipse cx="87.66" cy="50.11" rx="9.22" ry="1.9" transform="rotate(-19.5 87.66 50.11)" fill="#a87767" stroke="#66483c" stroke-width=".5"/><path d="M76.7 54 L82.37 51.99" stroke="#a87767" stroke-width="2.6" stroke-linecap="round"/><ellipse cx="89.67" cy="56.50" rx="9.89" ry="1.9" transform="rotate(0.0 89.67 56.50)" fill="#a87767" stroke="#66483c" stroke-width=".5"/><path d="M77.2 56.5 L83.65 56.50" stroke="#a87767" stroke-width="2.6" stroke-linecap="round"/><ellipse cx="86.23" cy="64.07" rx="8.71" ry="1.9" transform="rotate(24.0 86.23 64.07)" fill="#a87767" stroke="#66483c" stroke-width=".5"/><path d="M76.2 59.6 L81.39 61.91" stroke="#a87767" stroke-width="2.6" stroke-linecap="round"/>
</symbol><symbol id="kokoD" viewBox="0 0 120 130">
<use href="#rock"/>
<g fill="#a87767" stroke="#66483c" stroke-width=".8">
<path d="M28.2 66.4 C28 58 29 54 30.5 50.7 C32 46 34 43.5 37 42.5 C40 41 44 40.5 47 41 C50 42 53 43 55.2 44 C57 41 60.5 39.3 65 39.3 C69.5 39.3 73.2 42.5 73.2 46.5 C73.2 51 69.5 54 65 54 C61 54 58 52.5 55 52 C51 52 47 53 45 55 C42 57.5 41 60 40.6 63 C40 66 40 68 40.4 70.9 C40 76 42 80 44 83.3 C47 87 50 90 52.9 91.1 C57 92.5 61 93 65.3 93.4 L67.8 95.5 L69.8 101.2 L68 108 L72 108.2 L71.4 110 L64 110.8 L65.6 100.5 L55 98.5 L51 101 L50.5 108 L46.5 114.6 L51 115 L50.5 117 L42.5 116.8 L47.3 108.5 L45.5 100.8 C40 97 36 94 34 91 C31 86 29 80 28.6 74 Z"/>
<path d="M32 60 C32 72 35 84 44 92 C39 82 36 72 35.5 60 C35.5 52 38 47 43 44 C37 46 32 52 32 60Z" fill="#996a5a" stroke="none"/>
<path d="M66 50 L68.5 50 L70 65 L74.5 71 L64.5 70.5 L68 65Z"/>
</g>
<g fill="none" stroke="#a87767" stroke-linecap="round">
<path d="M47 52.5 C49 58 52 62 57 62.8 C61 63.5 65 63.5 68 62.8" stroke-width="2.6"/>
</g><ellipse cx="62.26" cy="29.56" rx="8.39" ry="1.9" transform="rotate(-99.5 62.26 29.56)" fill="#a87767" stroke="#66483c" stroke-width=".5"/><path d="M64 40 L63.10 34.60" stroke="#a87767" stroke-width="2.6" stroke-linecap="round"/><ellipse cx="70.53" cy="29.93" rx="7.76" ry="1.9" transform="rotate(-78.0 70.53 29.93)" fill="#a87767" stroke="#66483c" stroke-width=".5"/><path d="M68.5 39.5 L69.55 34.55" stroke="#a87767" stroke-width="2.6" stroke-linecap="round"/><ellipse cx="79.25" cy="32.01" rx="9.16" ry="1.9" transform="rotate(-51.1 79.25 32.01)" fill="#a87767" stroke="#66483c" stroke-width=".5"/><path d="M72 41 L75.75 36.35" stroke="#a87767" stroke-width="2.6" stroke-linecap="round"/><ellipse cx="84.23" cy="37.49" rx="9.57" ry="1.9" transform="rotate(-27.2 84.23 37.49)" fill="#a87767" stroke="#66483c" stroke-width=".5"/><path d="M73.5 43 L79.05 40.15" stroke="#a87767" stroke-width="2.6" stroke-linecap="round"/><ellipse cx="85.31" cy="44.34" rx="9.02" ry="1.9" transform="rotate(-5.9 85.31 44.34)" fill="#a87767" stroke="#66483c" stroke-width=".5"/><path d="M74 45.5 L79.85 44.90" stroke="#a87767" stroke-width="2.6" stroke-linecap="round"/>
</symbol></defs></svg><div class="abs" style="left:5px;top:122px;width:122px;height:132px;border:1px solid #000;background:#fff;overflow:hidden"><svg width="120" height="130" style="display:block"><use href="#kokoA"/></svg></div><div class="abs" style="left:133px;top:122px;width:122px;height:132px;border:1px solid #000;background:#fff;overflow:hidden"><svg width="120" height="130" style="display:block"><use href="#kokoD"/></svg></div><div class="abs" style="left:261px;top:122px;width:122px;height:132px;border:1px solid #000;background:#fff;overflow:hidden"><svg width="120" height="130" style="display:block"><use href="#kokoB"/></svg></div><div class="abs" style="left:389px;top:122px;width:122px;height:132px;border:1px solid #000;background:#fff;overflow:hidden"><svg width="120" height="130" style="display:block"><use href="#kokoB"/></svg></div><div class="abs" style="left:517px;top:122px;width:122px;height:132px;border:1px solid #000;background:#fff;overflow:hidden"><svg width="120" height="130" style="display:block"><use href="#kokoB"/></svg></div><div class="abs" style="left:645px;top:122px;width:122px;height:132px;border:1px solid #000;background:#fff;overflow:hidden"><svg width="120" height="130" style="display:block"><use href="#kokoB"/></svg></div><div class="abs" style="left:773px;top:122px;width:122px;height:132px;border:1px solid #000;background:#fff;overflow:hidden"><svg width="120" height="130" style="display:block"><use href="#kokoD"/></svg></div><div class="abs" style="left:901px;top:122px;width:122px;height:132px;border:1px solid #000;background:#fff;overflow:hidden"><svg width="120" height="130" style="display:block"><use href="#kokoA"/></svg></div><div class="abs" style="left:1029px;top:122px;width:122px;height:132px;border:1px solid #000;background:#fff;overflow:hidden"><svg width="120" height="130" style="display:block"><use href="#kokoC"/></svg></div>
<div class="abs" style="left:353px;top:279px;width:203px;height:251px;border-radius:8px;box-shadow:0 12px 40px rgba(0,0,0,.36),0 2px 6px rgba(0,0,0,.12);background:#f0f0f0;border:1px solid #adadad"></div><div class="abs" style="left:354px;top:280px;width:201px;height:34px;border-radius:7px 7px 0 0;background:#f3f3f3"></div><svg class="abs" style="left:362px;top:286px" width="17" height="17"><defs><linearGradient id="ig" x1="0" y1="0" x2="0" y2="1"><stop offset="0" stop-color="#4a7cff"/><stop offset=".5" stop-color="#a8e4ff"/><stop offset="1" stop-color="#5a8cff"/></linearGradient></defs><rect x="0" y="0" width="9.5" height="16" fill="#00008a"/><rect x="1.5" y="1" width="7" height="14" fill="url(#ig)"/><g fill="#fff"><rect x="0.7" y="2" width="1" height="1"/><rect x="0.7" y="4.5" width="1" height="1"/><rect x="0.7" y="7" width="1" height="1"/><rect x="0.7" y="9.5" width="1" height="1"/><rect x="0.7" y="12" width="1" height="1"/></g><path d="M11.50 4.20 L12.67 4.32 L13.15 6.23 L13.89 6.62 L15.74 5.96 L16.49 6.87 L15.47 8.55 L15.72 9.36 L17.50 10.20 L17.38 11.37 L15.47 11.85 L15.08 12.59 L15.74 14.44 L14.83 15.19 L13.15 14.17 L12.34 14.42 L11.50 16.20 L10.33 16.08 L9.85 14.17 L9.11 13.78 L7.26 14.44 L6.51 13.53 L7.53 11.85 L7.28 11.04 L5.50 10.20 L5.62 9.03 L7.53 8.55 L7.92 7.81 L7.26 5.96 L8.17 5.21 L9.85 6.23 L10.66 5.98Z" fill="#ffb400" stroke="#b85a00" stroke-width="0.9"/><circle cx="11.5" cy="10.2" r="2.6" fill="#e8e8f0" stroke="#8a5000" stroke-width="0.8"/><circle cx="11.8" cy="9.8" r="1.2" fill="#ffd000"/></svg><div class="abs" style="left:383px;top:287px;font-size:12px;color:#999;white-space:nowrap">Prev...</div><div class="abs" style="left:436px;top:294px;width:10px;height:1px;background:#ddd"></div><div class="abs" style="left:481px;top:289px;width:10px;height:10px;border:1px solid #777;border-radius:2px"></div><svg class="abs" style="left:527px;top:289px" width="11" height="11"><path d="M0.5 0.5L10.5 10.5M10.5 0.5L0.5 10.5" stroke="#777" stroke-width="1"/></svg><div class="abs" style="left:358px;top:314px;width:192px;height:162px;background:#f0f0f0;border-top:2px solid #707070;border-left:2px solid #707070;border-right:1px solid #fff;border-bottom:1px solid #fff"></div><div class="abs" style="left:394px;top:330px;width:120px;height:131px;background:#fff"><svg width="120" height="130" style="display:block"><use href="#kokoC"/></svg></div><svg class="abs" style="left:362px;top:486px" width="9" height="10"><path d="M0 0L9 5L0 10Z" fill="#000"/></svg><div class="abs" style="left:382px;top:487px;width:8px;height:8px;background:#999"></div><div class="abs" style="left:398px;top:482px;width:93px;height:20px;border:1px solid;border-color:#a0a0a0 #fff #fff #a0a0a0"></div><div class="abs" style="left:405px;top:489px;width:80px;height:4px;background:#e3e3e3;border:1px solid #d6d6d6;border-radius:1px"></div><div class="abs" style="left:478px;top:485px;width:6px;height:12px;background:#0078d7"></div><div class="abs" style="left:492px;top:482px;width:29px;height:20px;border:1px solid;border-color:#a0a0a0 #fff #fff #a0a0a0"></div><div class="abs" style="left:504px;top:486px;font:12px 'Liberation Mono',monospace;line-height:12px">9</div><svg class="abs" style="left:360px;top:510px" width="12" height="10" shape-rendering="crispEdges"><rect x="1" y="1" width="1" height="8" fill="#000"/><rect x="3" y="1" width="1" height="8" fill="#000"/><path d="M5 5L11 1V9Z" fill="#000" shape-rendering="auto"/></svg><svg class="abs" style="left:380px;top:510px" width="12" height="10" shape-rendering="crispEdges"><rect x="1" y="1" width="1" height="8" fill="#000"/><path d="M3 5L10 1V9Z" fill="#000" shape-rendering="auto"/></svg><svg class="abs" style="left:399px;top:510px" width="12" height="10" shape-rendering="crispEdges"><path d="M1 1L8 5L1 9Z" fill="#000" shape-rendering="auto"/><rect x="9" y="1" width="1" height="8" fill="#000"/></svg><svg class="abs" style="left:417px;top:510px" width="12" height="10" shape-rendering="crispEdges"><path d="M1 1L7 5L1 9Z" fill="#000" shape-rendering="auto"/><rect x="8" y="1" width="1" height="8" fill="#000"/><rect x="10" y="1" width="1" height="8" fill="#000"/></svg><div class="abs" style="left:436px;top:508px;width:1px;height:13px;background:#8a8a8a"></div><svg class="abs" style="left:443px;top:510px" width="12" height="10" shape-rendering="crispEdges"><rect x="1.5" y="1.5" width="9" height="6" fill="none" stroke="#000"/><rect x="5" y="8" width="2" height="1" fill="#000"/><rect x="3" y="9" width="6" height="1" fill="#000"/></svg><div class="abs" style="left:461px;top:508px;width:1px;height:13px;background:#8a8a8a"></div><svg class="abs" style="left:469px;top:509px" width="11" height="11"><circle cx="4.5" cy="4.5" r="3.6" fill="#fff" stroke="#000" stroke-width="1.3"/><path d="M7 7L10 10" stroke="#000" stroke-width="1.8"/><path d="M2.5 4.5H6.5M4.5 2.5V6.5" stroke="#000" stroke-width="1.3"/></svg><svg class="abs" style="left:487px;top:509px" width="11" height="11"><circle cx="4.5" cy="4.5" r="3.6" fill="#fff" stroke="#000" stroke-width="1.3"/><path d="M7 7L10 10" stroke="#000" stroke-width="1.8"/><path d="M2.5 4.5H6.5" stroke="#000" stroke-width="1.3"/></svg><svg class="abs" style="left:506px;top:509px" width="11" height="11"><circle cx="4.5" cy="4.5" r="3.6" fill="#fff" stroke="#000" stroke-width="1.3"/><path d="M7 7L10 10" stroke="#000" stroke-width="1.8"/><circle cx="4.5" cy="4.5" r="1.3" fill="none" stroke="#000"/></svg><svg class="abs" style="left:529px;top:494px" width="18" height="19"><circle cx="7" cy="7" r="6" fill="#fff" stroke="#000" stroke-width="1.3"/><path d="M4 5.5L7 7.5L10 4.5" fill="none" stroke="#000" stroke-width="1.2"/><path d="M12 13L14 15L12 17M14.5 13L16.5 15L14.5 17" fill="none" stroke="#000" stroke-width="0.9"/></svg>
<div class="abs cj" style="left:559px;top:189px;width:522px;height:420px;border-radius:8px;box-shadow:0 12px 40px rgba(0,0,0,.36),0 2px 6px rgba(0,0,0,.12);background:#f0f0f0;border:1px solid #adadad"></div><div class="abs cj" style="left:560px;top:190px;width:520px;height:29px;border-radius:7px 7px 0 0;background:#eef1f7"></div><div class="abs" style="left:568px;top:196px;font-size:12.5px;line-height:15px;white-space:nowrap;color:#000">颜色</div><svg class="abs" style="left:1060px;top:197px" width="12" height="12"><path d="M1 1L11 11M11 1L1 11" stroke="#222" stroke-width="1.1"/></svg><div class="abs cj" style="left:566px;top:229px;font-size:12px;line-height:15px;white-space:nowrap">基本颜色(<span class="u">B</span>):</div><div class="abs cj" style="left:570px;top:252px;width:22px;height:23px;background:#FF8080;border-style:solid;border-width:2px 1px 1px 2px;border-color:#8a8a8a #fff #fff #8a8a8a"></div><div class="abs cj" style="left:600px;top:252px;width:22px;height:23px;background:#FFFF80;border-style:solid;border-width:2px 1px 1px 2px;border-color:#8a8a8a #fff #fff #8a8a8a"></div><div class="abs cj" style="left:630px;top:252px;width:22px;height:23px;background:#80FF80;border-style:solid;border-width:2px 1px 1px 2px;border-color:#8a8a8a #fff #fff #8a8a8a"></div><div class="abs cj" style="left:660px;top:252px;width:22px;height:23px;background:#00FF80;border-style:solid;border-width:2px 1px 1px 2px;border-color:#8a8a8a #fff #fff #8a8a8a"></div><div class="abs cj" style="left:690px;top:252px;width:22px;height:23px;background:#80FFFF;border-style:solid;border-width:2px 1px 1px 2px;border-color:#8a8a8a #fff #fff #8a8a8a"></div><div class="abs cj" style="left:720px;top:252px;width:22px;height:23px;background:#0080FF;border-style:solid;border-width:2px 1px 1px 2px;border-color:#8a8a8a #fff #fff #8a8a8a"></div><div class="abs cj" style="left:750px;top:252px;width:22px;height:23px;background:#FF80C0;border-style:solid;border-width:2px 1px 1px 2px;border-color:#8a8a8a #fff #fff #8a8a8a"></div><div class="abs cj" style="left:780px;top:252px;width:22px;height:23px;background:#FF80FF;border-style:solid;border-width:2px 1px 1px 2px;border-color:#8a8a8a #fff #fff #8a8a8a"></div><div class="abs cj" style="left:570px;top:281px;width:22px;height:23px;background:#FF0000;border-style:solid;border-width:2px 1px 1px 2px;border-color:#8a8a8a #fff #fff #8a8a8a"></div><div class="abs cj" style="left:600px;top:281px;width:22px;height:23px;background:#FFFF00;border-style:solid;border-width:2px 1px 1px 2px;border-color:#8a8a8a #fff #fff #8a8a8a"></div><div class="abs cj" style="left:630px;top:281px;width:22px;height:23px;background:#80FF00;border-style:solid;border-width:2px 1px 1px 2px;border-color:#8a8a8a #fff #fff #8a8a8a"></div><div class="abs cj" style="left:660px;top:281px;width:22px;height:23px;background:#00FF40;border-style:solid;border-width:2px 1px 1px 2px;border-color:#8a8a8a #fff #fff #8a8a8a"></div><div class="abs cj" style="left:690px;top:281px;width:22px;height:23px;background:#00FFFF;border-style:solid;border-width:2px 1px 1px 2px;border-color:#8a8a8a #fff #fff #8a8a8a"></div><div class="abs cj" style="left:720px;top:281px;width:22px;height:23px;background:#0080C0;border-style:solid;border-width:2px 1px 1px 2px;border-color:#8a8a8a #fff #fff #8a8a8a"></div><div class="abs cj" style="left:750px;top:281px;width:22px;height:23px;background:#8080C0;border-style:solid;border-width:2px 1px 1px 2px;border-color:#8a8a8a #fff #fff #8a8a8a"></div><div class="abs cj" style="left:780px;top:281px;width:22px;height:23px;background:#FF00FF;border-style:solid;border-width:2px 1px 1px 2px;border-color:#8a8a8a #fff #fff #8a8a8a"></div><div class="abs cj" style="left:570px;top:310px;width:22px;height:23px;background:#804040;border-style:solid;border-width:2px 1px 1px 2px;border-color:#8a8a8a #fff #fff #8a8a8a"></div><div class="abs cj" style="left:600px;top:310px;width:22px;height:23px;background:#FF8040;border-style:solid;border-width:2px 1px 1px 2px;border-color:#8a8a8a #fff #fff #8a8a8a"></div><div class="abs cj" style="left:630px;top:310px;width:22px;height:23px;background:#00FF00;border-style:solid;border-width:2px 1px 1px 2px;border-color:#8a8a8a #fff #fff #8a8a8a"></div><div class="abs cj" style="left:660px;top:310px;width:22px;height:23px;background:#008080;border-style:solid;border-width:2px 1px 1px 2px;border-color:#8a8a8a #fff #fff #8a8a8a"></div><div class="abs cj" style="left:690px;top:310px;width:22px;height:23px;background:#004080;border-style:solid;border-width:2px 1px 1px 2px;border-color:#8a8a8a #fff #fff #8a8a8a"></div><div class="abs cj" style="left:720px;top:310px;width:22px;height:23px;background:#8080FF;border-style:solid;border-width:2px 1px 1px 2px;border-color:#8a8a8a #fff #fff #8a8a8a"></div><div class="abs cj" style="left:750px;top:310px;width:22px;height:23px;background:#800040;border-style:solid;border-width:2px 1px 1px 2px;border-color:#8a8a8a #fff #fff #8a8a8a"></div><div class="abs cj" style="left:780px;top:310px;width:22px;height:23px;background:#FF0080;border-style:solid;border-width:2px 1px 1px 2px;border-color:#8a8a8a #fff #fff #8a8a8a"></div><div class="abs cj" style="left:570px;top:339px;width:22px;height:23px;background:#800000;border-style:solid;border-width:2px 1px 1px 2px;border-color:#8a8a8a #fff #fff #8a8a8a"></div><div class="abs cj" style="left:600px;top:339px;width:22px;height:23px;background:#FF8000;border-style:solid;border-width:2px 1px 1px 2px;border-color:#8a8a8a #fff #fff #8a8a8a"></div><div class="abs cj" style="left:630px;top:339px;width:22px;height:23px;background:#008000;border-style:solid;border-width:2px 1px 1px 2px;border-color:#8a8a8a #fff #fff #8a8a8a"></div><div class="abs cj" style="left:660px;top:339px;width:22px;height:23px;background:#008040;border-style:solid;border-width:2px 1px 1px 2px;border-color:#8a8a8a #fff #fff #8a8a8a"></div><div class="abs cj" style="left:690px;top:339px;width:22px;height:23px;background:#0000FF;border-style:solid;border-width:2px 1px 1px 2px;border-color:#8a8a8a #fff #fff #8a8a8a"></div><div class="abs cj" style="left:720px;top:339px;width:22px;height:23px;background:#0000A0;border-style:solid;border-width:2px 1px 1px 2px;border-color:#8a8a8a #fff #fff #8a8a8a"></div><div class="abs cj" style="left:750px;top:339px;width:22px;height:23px;background:#800080;border-style:solid;border-width:2px 1px 1px 2px;border-color:#8a8a8a #fff #fff #8a8a8a"></div><div class="abs cj" style="left:780px;top:339px;width:22px;height:23px;background:#8000FF;border-style:solid;border-width:2px 1px 1px 2px;border-color:#8a8a8a #fff #fff #8a8a8a"></div><div class="abs cj" style="left:570px;top:368px;width:22px;height:23px;background:#400000;border-style:solid;border-width:2px 1px 1px 2px;border-color:#8a8a8a #fff #fff #8a8a8a"></div><div class="abs cj" style="left:600px;top:368px;width:22px;height:23px;background:#804000;border-style:solid;border-width:2px 1px 1px 2px;border-color:#8a8a8a #fff #fff #8a8a8a"></div><div class="abs cj" style="left:630px;top:368px;width:22px;height:23px;background:#004000;border-style:solid;border-width:2px 1px 1px 2px;border-color:#8a8a8a #fff #fff #8a8a8a"></div><div class="abs cj" style="left:660px;top:368px;width:22px;height:23px;background:#004040;border-style:solid;border-width:2px 1px 1px 2px;border-color:#8a8a8a #fff #fff #8a8a8a"></div><div class="abs cj" style="left:690px;top:368px;width:22px;height:23px;background:#000080;border-style:solid;border-width:2px 1px 1px 2px;border-color:#8a8a8a #fff #fff #8a8a8a"></div><div class="abs cj" style="left:720px;top:368px;width:22px;height:23px;background:#000040;border-style:solid;border-width:2px 1px 1px 2px;border-color:#8a8a8a #fff #fff #8a8a8a"></div><div class="abs cj" style="left:750px;top:368px;width:22px;height:23px;background:#400040;border-style:solid;border-width:2px 1px 1px 2px;border-color:#8a8a8a #fff #fff #8a8a8a"></div><div class="abs cj" style="left:780px;top:368px;width:22px;height:23px;background:#400080;border-style:solid;border-width:2px 1px 1px 2px;border-color:#8a8a8a #fff #fff #8a8a8a"></div><div class="abs cj" style="left:570px;top:397px;width:22px;height:23px;background:#000000;border-style:solid;border-width:2px 1px 1px 2px;border-color:#8a8a8a #fff #fff #8a8a8a"></div><div class="abs cj" style="left:600px;top:397px;width:22px;height:23px;background:#808000;border-style:solid;border-width:2px 1px 1px 2px;border-color:#8a8a8a #fff #fff #8a8a8a"></div><div class="abs cj" style="left:630px;top:397px;width:22px;height:23px;background:#808040;border-style:solid;border-width:2px 1px 1px 2px;border-color:#8a8a8a #fff #fff #8a8a8a"></div><div class="abs cj" style="left:660px;top:397px;width:22px;height:23px;background:#808080;border-style:solid;border-width:2px 1px 1px 2px;border-color:#8a8a8a #fff #fff #8a8a8a"></div><div class="abs cj" style="left:690px;top:397px;width:22px;height:23px;background:#408080;border-style:solid;border-width:2px 1px 1px 2px;border-color:#8a8a8a #fff #fff #8a8a8a"></div><div class="abs cj" style="left:720px;top:397px;width:22px;height:23px;background:#C0C0C0;border-style:solid;border-width:2px 1px 1px 2px;border-color:#8a8a8a #fff #fff #8a8a8a"></div><div class="abs cj" style="left:750px;top:397px;width:22px;height:23px;background:#400040;border-style:solid;border-width:2px 1px 1px 2px;border-color:#8a8a8a #fff #fff #8a8a8a"></div><div class="abs cj" style="left:780px;top:397px;width:22px;height:23px;background:#FFFFFF;border-style:solid;border-width:2px 1px 1px 2px;border-color:#8a8a8a #fff #fff #8a8a8a"></div><div class="abs cj" style="left:567px;top:249px;width:29px;height:30px;border:1px dotted #000"></div><div class="abs cj" style="left:569px;top:251px;width:25px;height:26px;border:1px solid #000"></div><div class="abs cj" style="left:570px;top:252px;width:23px;height:24px;background:#FF8080;border-style:solid;border-width:2px 1px 1px 2px;border-color:#555 #222 #222 #555"></div><div class="abs cj" style="left:567px;top:445px;font-size:12px;line-height:15px;white-space:nowrap">自定义颜色(<span class="u">C</span>):</div><div class="abs cj" style="left:570px;top:469px;width:22px;height:23px;background:#000;border-style:solid;border-width:2px 1px 1px 2px;border-color:#8a8a8a #fff #fff #8a8a8a"></div><div class="abs cj" style="left:600px;top:469px;width:22px;height:23px;background:#000;border-style:solid;border-width:2px 1px 1px 2px;border-color:#8a8a8a #fff #fff #8a8a8a"></div><div class="abs cj" style="left:630px;top:469px;width:22px;height:23px;background:#000;border-style:solid;border-width:2px 1px 1px 2px;border-color:#8a8a8a #fff #fff #8a8a8a"></div><div class="abs cj" style="left:660px;top:469px;width:22px;height:23px;background:#000;border-style:solid;border-width:2px 1px 1px 2px;border-color:#8a8a8a #fff #fff #8a8a8a"></div><div class="abs cj" style="left:690px;top:469px;width:22px;height:23px;background:#000;border-style:solid;border-width:2px 1px 1px 2px;border-color:#8a8a8a #fff #fff #8a8a8a"></div><div class="abs cj" style="left:720px;top:469px;width:22px;height:23px;background:#000;border-style:solid;border-width:2px 1px 1px 2px;border-color:#8a8a8a #fff #fff #8a8a8a"></div><div class="abs cj" style="left:750px;top:469px;width:22px;height:23px;background:#000;border-style:solid;border-width:2px 1px 1px 2px;border-color:#8a8a8a #fff #fff #8a8a8a"></div><div class="abs cj" style="left:780px;top:469px;width:22px;height:23px;background:#000;border-style:solid;border-width:2px 1px 1px 2px;border-color:#8a8a8a #fff #fff #8a8a8a"></div><div class="abs cj" style="left:570px;top:498px;width:22px;height:23px;background:#000;border-style:solid;border-width:2px 1px 1px 2px;border-color:#8a8a8a #fff #fff #8a8a8a"></div><div class="abs cj" style="left:600px;top:498px;width:22px;height:23px;background:#000;border-style:solid;border-width:2px 1px 1px 2px;border-color:#8a8a8a #fff #fff #8a8a8a"></div><div class="abs cj" style="left:630px;top:498px;width:22px;height:23px;background:#000;border-style:solid;border-width:2px 1px 1px 2px;border-color:#8a8a8a #fff #fff #8a8a8a"></div><div class="abs cj" style="left:660px;top:498px;width:22px;height:23px;background:#000;border-style:solid;border-width:2px 1px 1px 2px;border-color:#8a8a8a #fff #fff #8a8a8a"></div><div class="abs cj" style="left:690px;top:498px;width:22px;height:23px;background:#000;border-style:solid;border-width:2px 1px 1px 2px;border-color:#8a8a8a #fff #fff #8a8a8a"></div><div class="abs cj" style="left:720px;top:498px;width:22px;height:23px;background:#000;border-style:solid;border-width:2px 1px 1px 2px;border-color:#8a8a8a #fff #fff #8a8a8a"></div><div class="abs cj" style="left:750px;top:498px;width:22px;height:23px;background:#000;border-style:solid;border-width:2px 1px 1px 2px;border-color:#8a8a8a #fff #fff #8a8a8a"></div><div class="abs cj" style="left:780px;top:498px;width:22px;height:23px;background:#000;border-style:solid;border-width:2px 1px 1px 2px;border-color:#8a8a8a #fff #fff #8a8a8a"></div><div class="abs cj" style="left:567px;top:540px;width:239px;height:26px;border-radius:4px;background:#f9f9f9;border:1px solid #e6e6e6"></div><div class="abs cj" style="left:567px;top:545px;width:239px;text-align:center;font-size:12px;line-height:15px;color:#9e9e9e;white-space:nowrap">规定自定义颜色(<span class="u">D</span>) <span style="font-size:10px">&gt; &gt;</span></div><div class="abs cj" style="left:567px;top:573px;width:75px;height:26px;border-radius:4px;background:#fdfdfd;border:1px solid #0067c0;box-shadow:inset 0 0 0 1px #0067c0"></div><div class="abs cj" style="left:567px;top:578px;width:75px;text-align:center;font-size:12px;line-height:15px">确定</div><div class="abs cj" style="left:652px;top:573px;width:74px;height:26px;border-radius:4px;background:#fdfdfd;border:1px solid #d6d6d6"></div><div class="abs cj" style="left:652px;top:578px;width:74px;text-align:center;font-size:12px;line-height:15px">取消</div><div class="abs cj" style="left:825px;top:228px;width:207px;height:246px;border-style:solid;border-width:1px 1px 1px 1px;border-color:#8a8a8a #fff #fff #8a8a8a;background:linear-gradient(to bottom,rgba(128,128,128,0),rgba(128,128,128,1)),linear-gradient(to right,#f00 0%,#ff0 16.67%,#0f0 33.33%,#0ff 50%,#00f 66.67%,#f0f 83.33%,#f00 100%)"></div><div class="abs cj" style="left:962px;top:463px;width:2px;height:5px;background:#000"></div><div class="abs cj" style="left:956px;top:471px;width:4px;height:2px;background:#000"></div><div class="abs cj" style="left:966px;top:471px;width:4px;height:2px;background:#000"></div><div class="abs cj" style="left:1049px;top:228px;width:14px;height:246px;border-style:solid;border-width:1px;border-color:#8a8a8a #fff #fff #8a8a8a;background:linear-gradient(to bottom,rgb(255,255,255) 0.00%,rgb(255,255,255) 3.33%,rgb(246,246,246) 3.33%,rgb(246,246,246) 6.67%,rgb(237,237,237) 6.67%,rgb(237,237,237) 10.00%,rgb(229,229,229) 10.00%,rgb(229,229,229) 13.33%,rgb(220,220,220) 13.33%,rgb(220,220,220) 16.67%,rgb(211,211,211) 16.67%,rgb(211,211,211) 20.00%,rgb(202,202,202) 20.00%,rgb(202,202,202) 23.33%,rgb(193,193,193) 23.33%,rgb(193,193,193) 26.67%,rgb(185,185,185) 26.67%,rgb(185,185,185) 30.00%,rgb(176,176,176) 30.00%,rgb(176,176,176) 33.33%,rgb(167,167,167) 33.33%,rgb(167,167,167) 36.67%,rgb(158,158,158) 36.67%,rgb(158,158,158) 40.00%,rgb(149,149,149) 40.00%,rgb(149,149,149) 43.33%,rgb(141,141,141) 43.33%,rgb(141,141,141) 46.67%,rgb(132,132,132) 46.67%,rgb(132,132,132) 50.00%,rgb(123,123,123) 50.00%,rgb(123,123,123) 53.33%,rgb(114,114,114) 53.33%,rgb(114,114,114) 56.67%,rgb(106,106,106) 56.67%,rgb(106,106,106) 60.00%,rgb(97,97,97) 60.00%,rgb(97,97,97) 63.33%,rgb(88,88,88) 63.33%,rgb(88,88,88) 66.67%,rgb(79,79,79) 66.67%,rgb(79,79,79) 70.00%,rgb(70,70,70) 70.00%,rgb(70,70,70) 73.33%,rgb(62,62,62) 73.33%,rgb(62,62,62) 76.67%,rgb(53,53,53) 76.67%,rgb(53,53,53) 80.00%,rgb(44,44,44) 80.00%,rgb(44,44,44) 83.33%,rgb(35,35,35) 83.33%,rgb(35,35,35) 86.67%,rgb(26,26,26) 86.67%,rgb(26,26,26) 90.00%,rgb(18,18,18) 90.00%,rgb(18,18,18) 93.33%,rgb(9,9,9) 93.33%,rgb(9,9,9) 96.67%,rgb(0,0,0) 96.67%,rgb(0,0,0) 100.00%)"></div><svg class="abs" style="left:1064px;top:236px" width="8" height="15"><path d="M7 0.5V14L0 7.2Z" fill="#000"/></svg><div class="abs cj" style="left:825px;top:483px;width:70px;height:55px;background:#f0f0f0;border-style:solid;border-width:1px;border-color:#8a8a8a #fff #fff #8a8a8a"></div><div class="abs cj" style="left:824px;top:541px;font-size:12px;line-height:15px;white-space:nowrap">颜色|纯色(<span class="u">O</span>)</div><div class="abs cj" style="left:850px;top:488px;width:101px;text-align:right;font-size:12px;line-height:15px;white-space:nowrap">色调(<span class="u">E</span>):</div><div class="abs cj" style="left:850px;top:518px;width:101px;text-align:right;font-size:12px;line-height:15px;white-space:nowrap">饱和度(<span class="u">S</span>):</div><div class="abs cj" style="left:850px;top:547px;width:101px;text-align:right;font-size:12px;line-height:15px;white-space:nowrap">亮度(<span class="u">L</span>):</div><div class="abs cj" style="left:980px;top:488px;width:46px;text-align:right;font-size:12px;line-height:15px;white-space:nowrap">红(<span class="u">R</span>):</div><div class="abs cj" style="left:980px;top:518px;width:46px;text-align:right;font-size:12px;line-height:15px;white-space:nowrap">绿(<span class="u">G</span>):</div><div class="abs cj" style="left:980px;top:547px;width:46px;text-align:right;font-size:12px;line-height:15px;white-space:nowrap">蓝(<span class="u">U</span>):</div><div class="abs cj" style="left:954px;top:484px;width:31px;height:25px;background:#fff;border:1px solid #ececec;border-bottom:1px solid #8a8a8a;border-radius:2px"></div><div class="abs cj" style="left:957px;top:488px;font-size:12px;line-height:15px">160</div><div class="abs cj" style="left:1031px;top:484px;width:31px;height:25px;background:#fff;border:1px solid #ececec;border-bottom:1px solid #8a8a8a;border-radius:2px"></div><div class="abs cj" style="left:1034px;top:488px;font-size:12px;line-height:15px">240</div><div class="abs cj" style="left:954px;top:513px;width:31px;height:25px;background:#fff;border:1px solid #ececec;border-bottom:1px solid #8a8a8a;border-radius:2px"></div><div class="abs cj" style="left:957px;top:517px;font-size:12px;line-height:15px">0</div><div class="abs cj" style="left:1031px;top:513px;width:31px;height:25px;background:#fff;border:1px solid #ececec;border-bottom:1px solid #8a8a8a;border-radius:2px"></div><div class="abs cj" style="left:1034px;top:517px;font-size:12px;line-height:15px">240</div><div class="abs cj" style="left:954px;top:543px;width:31px;height:25px;background:#fff;border:1px solid #ececec;border-bottom:1px solid #8a8a8a;border-radius:2px"></div><div class="abs cj" style="left:957px;top:547px;font-size:12px;line-height:15px">226</div><div class="abs cj" style="left:1031px;top:543px;width:31px;height:25px;background:#fff;border:1px solid #ececec;border-bottom:1px solid #8a8a8a;border-radius:2px"></div><div class="abs cj" style="left:1034px;top:547px;font-size:12px;line-height:15px">240</div><div class="abs cj" style="left:826px;top:573px;width:247px;height:26px;border-radius:4px;background:#fdfdfd;border:1px solid #d6d6d6"></div><div class="abs cj" style="left:826px;top:578px;width:247px;text-align:center;font-size:12px;line-height:15px;white-space:nowrap">添加到自定义颜色(<span class="u">A</span>)</div>
</body></html>
